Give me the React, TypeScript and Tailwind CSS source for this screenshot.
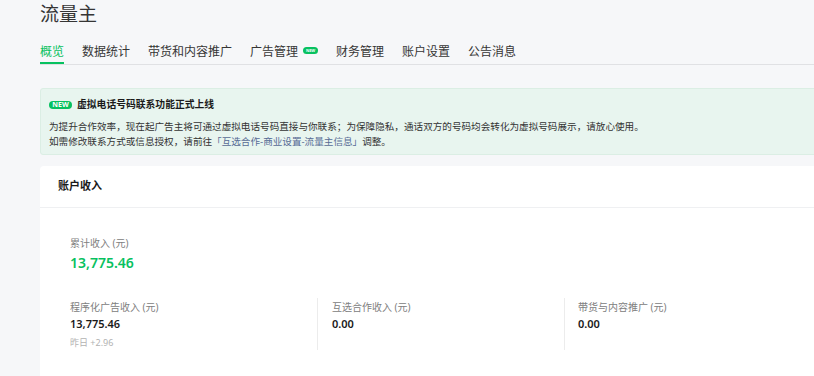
const tabs = ["概览", "数据统计", "带货和内容推广", "广告管理", "财务管理", "账户设置", "公告消息"];

export default function App() {
  return (
    <div className="w-[814px] h-[376px] overflow-hidden bg-[#f6f7f9] font-['Noto_Sans','Noto_Sans_CJK_SC',sans-serif] text-[#1a1a1a]">
      <div className="ml-10 w-[820px]">
        <h1 className="text-[19px] leading-[28px] text-[#353535]">流量主</h1>

        {/* Tabs */}
        <nav className="mt-[12px] flex gap-[18px] border-b border-[#e0e1e4] text-[12px]">
          {tabs.map((t, i) => (
            <div
              key={t}
              className={
                i === 0
                  ? "h-[24px] pt-[3px] leading-[18px] border-b-2 border-[#07c160] text-[#07c160]"
                  : "h-[24px] pt-[3px] leading-[18px] border-b-2 border-transparent text-[#353535] flex"
              }
            >
              {t}
              {t === "广告管理" && (
                <span className="ml-[5px] mt-[4px] h-[7px] w-[15px] rounded-full bg-[#07c160] text-white text-[4px] leading-[7px] font-bold text-center">
                  NEW
                </span>
              )}
            </div>
          ))}
        </nav>

        {/* Notice */}
        <div className="mt-[23px] h-[67px] rounded-[3px] border border-[#dbeee4] bg-[#e8f5ef] pl-[8px] pt-[9px] text-[9.6px]">
          <div className="flex items-center h-[14px]">
            <span className="h-[8px] w-[23px] rounded-full bg-[#07c160] text-white text-[7px] leading-[8px] font-bold text-center">
              NEW
            </span>
            <span className="ml-[5px] font-bold text-[9.8px] leading-[14px]">虚拟电话号码联系功能正式上线</span>
          </div>
          <div className="mt-[8px] leading-[14.5px] text-[#333]">
            <p>为提升合作效率，现在起广告主将可通过虚拟电话号码直接与你联系；为保障隐私，通话双方的号码均会转化为虚拟号码展示，请放心使用。</p>
            <p>
              如需修改联系方式或信息授权，请前往
              <span className="text-[#576b95]">「互选合作-商业设置-流量主信息」</span>
              调整。
            </p>
          </div>
        </div>

        {/* Income card */}
        <div className="mt-[11px] h-[240px] rounded-[4px] bg-white">
          <div className="h-[42px] flex items-center px-[18px] border-b border-[#eff0f2] text-[11px] font-bold">
            账户收入
          </div>
          <div className="pl-[30px] pt-[28px]">
            <div className="text-[10px] leading-[14px] text-[#808080]">累计收入 (元)</div>
            <div className="mt-[3px] text-[14px] leading-[20px] font-semibold text-[#07c160]">13,775.46</div>

            <div className="mt-[25px] flex">
              <div className="w-[247px] pt-[2px]">
                <div className="text-[10px] leading-[14px] text-[#808080]">程序化广告收入 (元)</div>
                <div className="mt-[2px] text-[11px] leading-[16px] font-semibold">13,775.46</div>
                <div className="mt-[4px] text-[9px] leading-[14px] text-[#b2b2b2]">昨日 +2.96</div>
              </div>
              <div className="w-[247px] pt-[2px] pl-[14px] border-l border-[#ececec]">
                <div className="text-[10px] leading-[14px] text-[#808080]">互选合作收入 (元)</div>
                <div className="mt-[2px] text-[11px] leading-[16px] font-semibold">0.00</div>
              </div>
              <div className="w-[247px] pt-[2px] pl-[13px] border-l border-[#ececec]">
                <div className="text-[10px] leading-[14px] text-[#808080]">带货与内容推广 (元)</div>
                <div className="mt-[2px] text-[11px] leading-[16px] font-semibold">0.00</div>
              </div>
            </div>
          </div>
        </div>
      </div>
    </div>
  );
}
